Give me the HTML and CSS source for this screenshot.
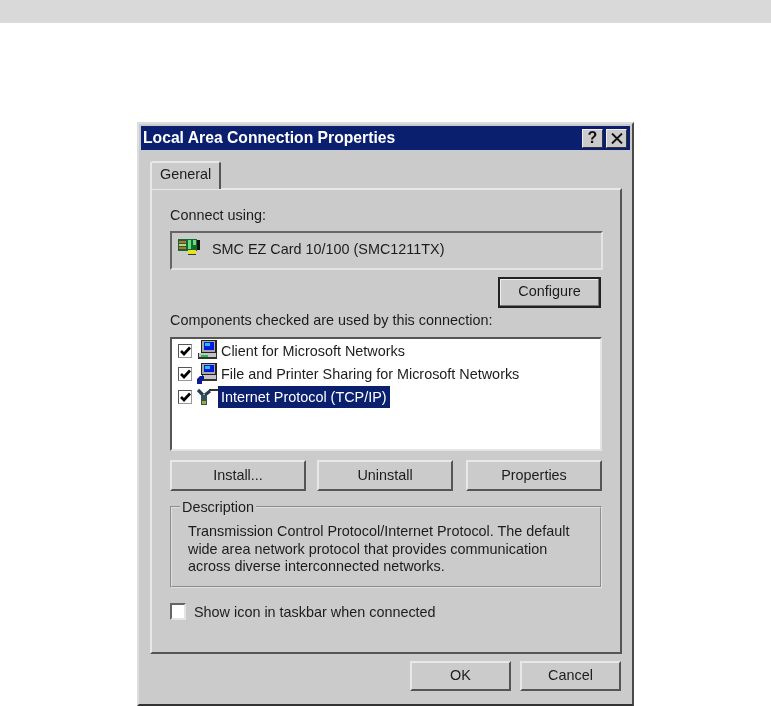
FILE: index.html
```html
<!DOCTYPE html>
<html>
  <head>
    <title>Local Area Connection Properties</title>
    <link rel="stylesheet" href="styles.css">
  </head>
  <body>
    <div class="top-bar"></div>

    <div class="window">
      <div class="title-bar">
        <span class="title-text">Local Area Connection Properties</span>
        <div class="title-buttons">
          <div class="title-btn">?</div>
          <div class="title-btn">
            <svg width="12" height="11" viewBox="0 0 12 11"><path d="M1 0.5 L11 10.5 M11 0.5 L1 10.5" stroke="#111" stroke-width="1.9" fill="none"/></svg>
          </div>
        </div>
      </div>

      <div class="tabs">
        <div class="tab">General</div>
      </div>

      <div class="panel">
        <p class="label first">Connect using:</p>
        <div class="adapter-box">
          <svg class="adapter-icon" width="22" height="16" viewBox="0 0 22 16">
            <rect x="0" y="0" width="19" height="12" fill="#0c6e2a"/>
            <rect x="1" y="2" width="7" height="2" fill="#d8603a"/>
            <rect x="1" y="5" width="7" height="2" fill="#b8d890"/>
            <rect x="1" y="8" width="7" height="2" fill="#d8603a"/>
            <rect x="10" y="1" width="3" height="9" fill="#6fd884"/>
            <rect x="15" y="1" width="3" height="5" fill="#6fd884"/>
            <rect x="19" y="1" width="3" height="10" fill="#111"/>
            <rect x="10" y="11" width="8" height="4" fill="#e8e020"/>
            <rect x="10" y="15" width="8" height="1" fill="#333"/>
          </svg>
          <span>SMC EZ Card 10/100 (SMC1211TX)</span>
        </div>

        <div class="configure-row">
          <div class="btn btn-default">Configure</div>
        </div>

        <p class="label">Components checked are used by this connection:</p>
        <div class="list">
          <div class="row">
            <span class="check"><svg width="11" height="10" viewBox="0 0 11 10"><path d="M1 5 L4 8 L10 1.5" stroke="#000" stroke-width="2.7" fill="none"/></svg></span>
            <svg class="row-icon" width="21" height="21" viewBox="0 0 21 21">
              <rect x="4" y="0" width="16" height="13" fill="#222"/>
              <rect x="5" y="1" width="13" height="11" fill="#a8a8a8"/>
              <rect x="7" y="2" width="10" height="8" fill="#0018e0"/>
              <rect x="8" y="3" width="5" height="3" fill="#18c8e8"/>
              <rect x="1" y="13" width="19" height="6" fill="#333"/>
              <rect x="2" y="13" width="17" height="4" fill="#c4c4c4"/>
              <rect x="4" y="15" width="7" height="2" fill="#20c040"/>
            </svg>
            <span class="row-text">Client for Microsoft Networks</span>
          </div>
          <div class="row">
            <span class="check"><svg width="11" height="10" viewBox="0 0 11 10"><path d="M1 5 L4 8 L10 1.5" stroke="#000" stroke-width="2.7" fill="none"/></svg></span>
            <svg class="row-icon" width="21" height="21" viewBox="0 0 21 21">
              <rect x="4" y="0" width="16" height="12" fill="#222"/>
              <rect x="5" y="1" width="13" height="10" fill="#a8a8a8"/>
              <rect x="7" y="2" width="10" height="7" fill="#0018e0"/>
              <rect x="8" y="3" width="5" height="3" fill="#18c8e8"/>
              <rect x="5" y="12" width="15" height="6" fill="#333"/>
              <rect x="6" y="12" width="13" height="4" fill="#c4c4c4"/>
              <path d="M0 21 V16 L3 13 H7 V16 L5 18 V21 Z" fill="#0a1a9a"/>
            </svg>
            <span class="row-text">File and Printer Sharing for Microsoft Networks</span>
          </div>
          <div class="row">
            <span class="check"><svg width="11" height="10" viewBox="0 0 11 10"><path d="M1 5 L4 8 L10 1.5" stroke="#000" stroke-width="2.7" fill="none"/></svg></span>
            <svg class="row-icon" width="21" height="21" viewBox="0 0 21 21">
              <path d="M1 4 L6 9 M13 5 L8 9" stroke="#23404e" stroke-width="3.2" fill="none"/>
              <rect x="12" y="3" width="9" height="2" fill="#333"/>
              <rect x="4" y="9" width="6" height="10" fill="#34525c"/>
              <rect x="5" y="15" width="4" height="3" fill="#a8a830"/>
            </svg>
            <span class="row-text selected">Internet Protocol (TCP/IP)</span>
          </div>
        </div>

        <div class="button-row">
          <div class="btn">Install...</div>
          <div class="btn">Uninstall</div>
          <div class="btn btn-last">Properties</div>
        </div>

        <fieldset class="group">
          <legend>Description</legend>
          <p>Transmission Control Protocol/Internet Protocol. The default wide area network protocol that provides communication across diverse interconnected networks.</p>
        </fieldset>

        <div class="taskbar-row">
          <span class="check check-empty"></span>
          <span>Show icon in taskbar when connected</span>
        </div>
      </div>

      <div class="footer">
        <div class="btn btn-footer">OK</div>
        <div class="btn btn-footer">Cancel</div>
      </div>
    </div>
  </body>
</html>
```

FILE: styles.css
```css
body {
  margin: 0;
  background: #fff;
  font-family: "Liberation Sans", Arial, sans-serif;
  font-size: 14.4px;
  color: #1c1c1c;
  overflow: hidden;
}

.top-bar {
  height: 23px;
  background: #d9d9d9;
}

.window {
  box-sizing: border-box;
  width: 497px;
  height: 584px;
  margin: 99px 0 0 137px;
  padding: 2px;
  background: #cbcbcb;
  border: 2px solid;
  border-color: #dedede #4a4a4a #333 #dedede;
  filter: blur(0.4px);
}

.title-bar {
  height: 24px;
  background: #0b1f6f;
  color: #fff;
  display: flex;
  align-items: center;
  justify-content: space-between;
  padding: 0 3px 0 2px;
}

.title-text {
  font-weight: bold;
  font-size: 15.7px;
}

.title-buttons {
  display: flex;
  gap: 3px;
}

.title-btn {
  box-sizing: border-box;
  width: 21px;
  height: 19px;
  background: #cbcbcb;
  border: 1px solid;
  border-color: #eee #333 #333 #eee;
  color: #111;
  font-weight: bold;
  font-size: 16px;
  display: flex;
  align-items: center;
  justify-content: center;
}

.tabs {
  display: flex;
  margin: 11px 0 0 9px;
}

.tab {
  box-sizing: border-box;
  width: 71px;
  height: 28px;
  padding: 3px 0 0 8px;
  border: 2px solid;
  border-color: #e8e8e8 #555 transparent #e8e8e8;
  border-bottom: none;
  border-radius: 3px 3px 0 0;
  position: relative;
  margin-bottom: -1px;
  background: #cbcbcb;
}

.panel {
  box-sizing: border-box;
  width: 472px;
  height: 466px;
  margin-left: 9px;
  padding: 17px 18px 0;
  border: 2px solid;
  border-color: #e8e8e8 #555 #555 #e8e8e8;
}

.label {
  margin: 4px 0 8px;
  line-height: 17px;
}

.label.first {
  margin: 0 0 7px;
}

.adapter-box {
  box-sizing: border-box;
  width: 433px;
  height: 39px;
  border: 2px solid;
  border-color: #666 #e4e4e4 #e4e4e4 #666;
  display: flex;
  align-items: center;
  padding: 0 0 3px 6px;
  gap: 12px;
}

.adapter-icon {
  margin-top: -4px;
}

.configure-row {
  display: flex;
  justify-content: flex-end;
  margin: 7px 1px 0 0;
}

.btn {
  box-sizing: border-box;
  width: 137px;
  height: 31px;
  background: #cbcbcb;
  border: 2px solid;
  border-color: #e8e8e8 #555 #555 #e8e8e8;
  display: flex;
  align-items: center;
  justify-content: center;
  padding-bottom: 2px;
}

.btn-default {
  width: 103px;
  border: 2px solid #222;
  box-shadow: inset -1px -1px 0 #777, inset 1px 1px 0 #eee;
  padding-bottom: 3px;
}

.btn-last {
  margin-left: 2px;
}

.list {
  box-sizing: border-box;
  width: 432px;
  height: 114px;
  background: #fff;
  border: 2px solid;
  border-color: #555 #e4e4e4 #e4e4e4 #555;
}

.row {
  display: flex;
  align-items: center;
  height: 23px;
  padding-left: 6px;
}

.check {
  box-sizing: border-box;
  flex: none;
  width: 14px;
  height: 14px;
  background: #fff;
  border: 1px solid;
  border-color: #555 #999 #999 #555;
  display: flex;
  align-items: center;
  justify-content: center;
}

.row-icon {
  flex: none;
  margin-left: 5px;
}

.row-text {
  padding: 3px;
  white-space: nowrap;
}

.selected {
  background: #0b1f6f;
  color: #fff;
}

.button-row {
  display: flex;
  gap: 11px;
  margin-top: 9px;
}

.group {
  box-sizing: border-box;
  width: 432px;
  height: 89px;
  margin: 8px 0 0;
  padding: 0;
  border: 2px groove #e0e0e0;
}

.group legend {
  padding: 0 2px;
  margin-left: 8px;
  line-height: 16px;
}

.group p {
  margin: 8px 0 0 16px;
  line-height: 17.5px;
  width: 395px;
}

.taskbar-row {
  display: flex;
  align-items: center;
  gap: 8px;
  margin-top: 15px;
}

.check-empty {
  width: 16px;
  height: 17px;
  border-width: 2px;
  border-color: #666 #e4e4e4 #e4e4e4 #666;
}

.footer {
  display: flex;
  justify-content: flex-end;
  gap: 9px;
  margin: 7px 9px 0 0;
}

.btn-footer {
  width: 101px;
  height: 30px;
}
```
